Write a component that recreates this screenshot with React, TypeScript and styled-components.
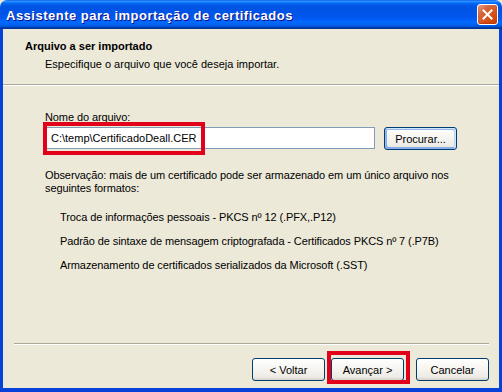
import React from 'react';
import styled, {createGlobalStyle} from "styled-components";

const GlobalStyle = createGlobalStyle`
  html, body {
    margin: 0;
    padding: 0;
    background: #ECE9D8;
  }
  body {
    font-family: "Liberation Sans", Arial, sans-serif;
    font-size: 11px;
    color: #000;
  }
`

const formats = [
    "Troca de informações pessoais - PKCS nº 12 (.PFX,.P12)",
    "Padrão de sintaxe de mensagem criptografada - Certificados PKCS nº 7 (.P7B)",
    "Armazenamento de certificados serializados da Microsoft (.SST)",
]

export default function App() {
    return (
        <>
            <GlobalStyle/>
            <Window>
                <TitleBar>
                    <Title>Assistente para importação de certificados</Title>
                    <CloseButton>
                        <svg width="11" height="11" viewBox="0 0 11 11">
                            <path d="M1.5 1.5 L9.5 9.5 M9.5 1.5 L1.5 9.5" stroke="#fff" strokeWidth="2"
                                  strokeLinecap="square"/>
                        </svg>
                    </CloseButton>
                </TitleBar>
                <Frame>
                    <Header>
                        <HeaderTitle>Arquivo a ser importado</HeaderTitle>
                        <HeaderText>Especifique o arquivo que você deseja importar.</HeaderText>
                    </Header>
                    <Body>
                        <Label>Nome do arquivo:</Label>
                        <FieldRow>
                            <FieldWrap>
                                <TextBox value={"C:\\temp\\CertificadoDeall.CER"} readOnly/>
                                <FieldMark/>
                            </FieldWrap>
                            <Button $focused>Procurar...</Button>
                        </FieldRow>
                        <Note>
                            Observação: mais de um certificado pode ser armazenado em um único arquivo nos
                            <br/>seguintes formatos:
                        </Note>
                        <FormatList>
                            {formats.map(f => <FormatItem key={f}>{f}</FormatItem>)}
                        </FormatList>
                    </Body>
                    <Footer>
                        <Separator/>
                        <ButtonRow>
                            <Button>&lt; Voltar</Button>
                            <NextWrap>
                                <Button>Avançar &gt;</Button>
                                <NextMark/>
                            </NextWrap>
                            <Button>Cancelar</Button>
                        </ButtonRow>
                    </Footer>
                </Frame>
            </Window>
        </>
    );
}

const Window = styled.div`
  width: 502px;
  height: 392px;
  display: flex;
  flex-direction: column;
  overflow: hidden;
`

const TitleBar = styled.div`
  height: 29px;
  flex-shrink: 0;
  display: flex;
  align-items: center;
  justify-content: space-between;
  padding: 0 4px 0 6px;
  box-sizing: border-box;
  border-radius: 7px 7px 0 0;
  background: linear-gradient(to bottom, #0058EE 0%, #3593FF 4%, #288EFF 6%, #127DFF 8%, #036FFC 10%,
  #0262EE 14%, #0057E5 20%, #0054E3 24%, #0055EB 56%, #005BF5 66%, #026AFE 76%, #0062EF 86%,
  #0052D6 92%, #0040AB 94%, #003092 100%);
`

const Title = styled.span`
  color: #fff;
  font-family: "Liberation Sans", Arial, sans-serif;
  font-weight: bold;
  font-size: 13px;
  letter-spacing: 0.5px;
  text-shadow: 1px 1px #0F1089;
  margin-top: 1px;
`

const CloseButton = styled.div`
  width: 21px;
  height: 21px;
  box-sizing: border-box;
  border: 1px solid #fff;
  border-radius: 3px;
  display: flex;
  align-items: center;
  justify-content: center;
  background: radial-gradient(circle at 90% 90%, #CC4600 0%, #DC5A27 55%, #D06A46 70%, #E8906F 90%, #F7C9B8 100%);
  box-shadow: inset 0 -1px 2px #B8360C;
`

const Frame = styled.div`
  flex: 1;
  display: flex;
  flex-direction: column;
  background: #ECE9D8;
  border: solid #0841D8;
  border-width: 0 3px 4px 3px;
`

const Header = styled.div`
  height: 56px;
  flex-shrink: 0;
  box-sizing: border-box;
  padding: 11px 0 0 22px;
  border-bottom: 1px solid #ACA899;
  box-shadow: 0 1px 0 #fff;
`

const HeaderTitle = styled.div`
  font-weight: bold;
  line-height: 13px;
`

const HeaderText = styled.div`
  line-height: 13px;
  margin-top: 5px;
  padding-left: 20px;
`

const Body = styled.div`
  flex: 1;
  padding: 26px 0 0 42px;
  line-height: 13px;
  letter-spacing: -0.1px;
`

const Label = styled.div``

const FieldRow = styled.div`
  display: flex;
  align-items: flex-start;
  gap: 9px;
  margin-top: 3px;
`

const FieldWrap = styled.div`
  position: relative;
`

const TextBox = styled.input`
  display: block;
  width: 330px;
  height: 22px;
  box-sizing: border-box;
  border: 1px solid #7F9DB9;
  background: #fff;
  padding: 0 0 0 5px;
  margin: 0;
  font-family: "Liberation Sans", Arial, sans-serif;
  font-size: 11px;
  color: #000;
  outline: none;
`

const FieldMark = styled.div`
  position: absolute;
  left: -2px;
  top: -5px;
  width: 162px;
  height: 33px;
  box-sizing: border-box;
  border: 4px solid #E2001A;
  pointer-events: none;
`

const Button = styled.button<{ $focused?: boolean }>`
  width: 73px;
  height: 23px;
  box-sizing: border-box;
  padding: 0;
  border: 1px solid #003C74;
  border-radius: 3px;
  font-family: "Liberation Sans", Arial, sans-serif;
  font-size: 11px;
  letter-spacing: 0;
  color: #000;
  background: linear-gradient(180deg, #fff 0%, #F5F4EF 50%, #ECEBE6 86%, #D6D0C5 100%);
  box-shadow: ${p => p.$focused
          ? "inset -1px 1px #CEE7FF, inset 1px 2px #98B8EA, inset -2px 2px #BCD4F6, inset 1px -1px #89ADE4, inset 2px -2px #89ADE4"
          : "none"};
`

const Note = styled.div`
  margin-top: 19px;
`

const FormatList = styled.div`
  margin-top: 16px;
  padding-left: 15px;
  display: flex;
  flex-direction: column;
  gap: 11px;
`

const FormatItem = styled.div``

const Footer = styled.div`
  flex-shrink: 0;
  padding: 0 10px 7px 11px;
`

const Separator = styled.div`
  border-top: 1px solid #ACA899;
  border-bottom: 1px solid #fff;
`

const ButtonRow = styled.div`
  display: flex;
  justify-content: flex-end;
  gap: 6px;
  margin-top: 13px;

  & > :last-child {
    margin-left: 6px;
  }
`

const NextWrap = styled.div`
  position: relative;
`

const NextMark = styled.div`
  position: absolute;
  left: -4px;
  top: -7px;
  width: 83px;
  height: 33px;
  box-sizing: border-box;
  border: 4px solid #E2001A;
  pointer-events: none;
`
